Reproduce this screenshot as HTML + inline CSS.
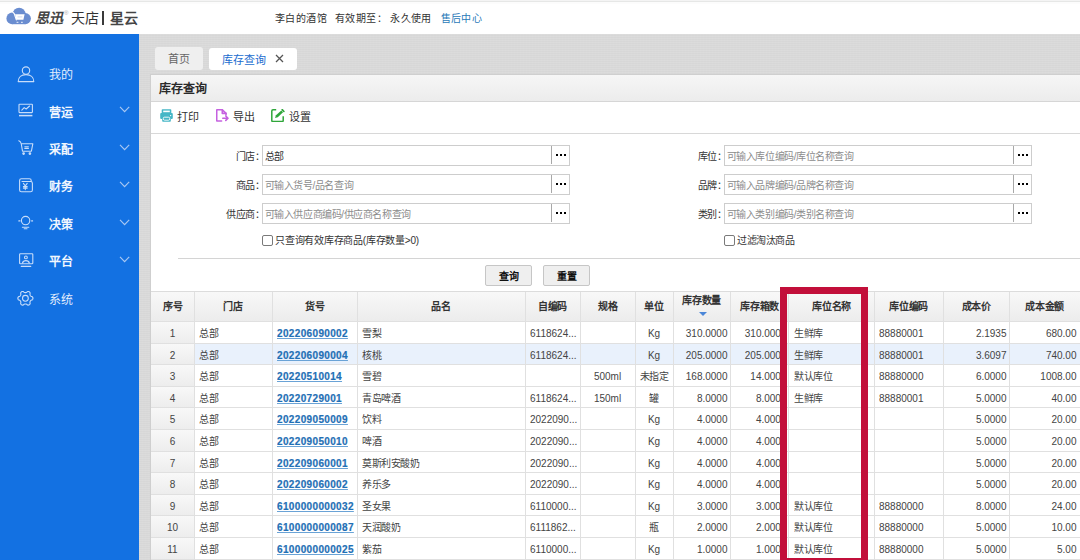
<!DOCTYPE html><html lang="zh-CN"><head><meta charset="utf-8"><style>
*{box-sizing:border-box;margin:0;padding:0}
html,body{width:1080px;height:560px;overflow:hidden;background:#fff;font-family:"Liberation Sans",sans-serif;color:#333}
.a{position:absolute;white-space:nowrap}
.mi{position:absolute;left:49px;font-size:12px;line-height:14px;color:#fff;white-space:nowrap}
.lbl{position:absolute;font-size:10px;line-height:14px;color:#333;text-align:right;white-space:nowrap;letter-spacing:-0.4px}
.inp{position:absolute;height:21px;border:1px solid #cdcdcd;background:#fff}
.ph{position:absolute;font-size:10px;line-height:14px;color:#8c8c8c;white-space:nowrap;letter-spacing:-0.4px}
.sep{position:absolute;width:1px;background:#a8a8a8}
.dot{position:absolute;width:2px;height:2px;background:#000}
.chk{position:absolute;width:11px;height:11px;border:1px solid #7a7a7a;border-radius:2px;background:#fff}
.qbtn{position:absolute;top:265px;width:47px;height:21px;border:1px solid #c6c6c6;border-radius:2px;background:#efefef}
.qbtn span{position:absolute;left:0;width:100%;top:3.5px;text-align:center;font-size:10px;line-height:14px;font-weight:bold;color:#111}
.th{position:absolute;font-size:10px;line-height:14px;font-weight:bold;color:#333;text-align:center;white-space:nowrap;letter-spacing:-0.3px;text-indent:0.3px}
.td{position:absolute;font-size:10px;line-height:14px;color:#444;white-space:nowrap;overflow:hidden}
.lnk{font-weight:bold;font-size:10px;letter-spacing:0.35px;-webkit-text-stroke:0.2px #1f6fb5;color:#1f6fb5;text-decoration:underline;text-decoration-color:#6aa3d6;text-underline-offset:0.5px}
</style></head><body>
<div class="a" style="left:0;top:0;width:1080px;height:1px;background:#f4f4f4"></div><div class="a" style="left:0;top:1px;width:1080px;height:1px;background:#e6e7e6"></div><div class="a" style="left:0;top:2px;width:1080px;height:2px;background:#fcfcfc"></div>
<svg class="a" style="left:0;top:0" width="40" height="34" viewBox="0 0 40 34">
<g fill="#6a8dd0"><circle cx="12.2" cy="18.4" r="5.8"/><circle cx="19.1" cy="14.1" r="6.4"/><circle cx="25.3" cy="18.6" r="5.6"/><rect x="12.2" y="17" width="13.1" height="7.2"/></g>
<path d="M15 14.3 L24.6 14.3 L23.4 19.7 L16.3 19.7 Z" fill="#fff"/>
<path d="M12.8 12.1 L14.2 13.5 L16.3 19.9" fill="none" stroke="#fff" stroke-width="1.1" stroke-linecap="round"/>
<path d="M17.6 16.9 H22.3" stroke="#c9d6ef" stroke-width="0.9"/>
<path d="M16.6 22.3 H18.4 M21 22.3 H22.8" stroke="#fff" stroke-width="0.9"/>
</svg>
<div class="a" style="left:34.5px;top:8.7px;font-size:14px;line-height:18px;color:#444;font-style:italic;font-weight:700">思迅</div>
<div class="a" style="left:64px;top:9px;font-size:6px;line-height:8px;color:#aaa">®</div>
<div class="a" style="left:70.5px;top:8.7px;font-size:14px;line-height:18px;color:#333;font-weight:500">天店</div>
<div class="a" style="left:102.2px;top:11.3px;width:1.5px;height:14px;background:#3a3a3a"></div>
<div class="a" style="left:109.5px;top:8.7px;font-size:14px;line-height:18px;color:#444;font-weight:700">星云</div>
<div class="a" style="left:275px;top:11.5px;font-size:10px;line-height:14px;color:#333;letter-spacing:0.4px">李白的酒馆</div>
<div class="a" style="left:335px;top:11.5px;font-size:10px;line-height:14px;color:#333;letter-spacing:0.4px">有效期至：</div>
<div class="a" style="left:390.2px;top:11.5px;font-size:10px;line-height:14px;color:#333;letter-spacing:0.4px">永久使用</div>
<div class="a" style="left:440.5px;top:11.5px;font-size:10px;line-height:14px;color:#2a7ab8;letter-spacing:0.4px">售后中心</div>
<div class="a" style="left:0;top:34px;width:139px;height:526px;background:#1371e2"></div>
<svg class="a" style="left:0;top:0" width="139" height="560" viewBox="0 0 139 560" fill="none" stroke="#c8ddfa" stroke-width="1.1" stroke-linecap="round" stroke-linejoin="round">
<circle cx="26" cy="70.6" r="3.7"/><path d="M18.2 81.6 C18.2 77 21.6 74.6 26 74.6 C30.4 74.6 33.8 77 33.8 81.6 Z"/>
<rect x="19" y="104.2" width="13.4" height="8.4" rx="0.6"/><path d="M19 115.6 h13.4" stroke-width="1.5" stroke-linecap="butt"/><path d="M21.8 110.2 L24.2 107.6 L26.2 109 L29.6 106"/>
<path d="M18.8 140.7 C20.6 141.3 21 142.4 21.3 144 L22.5 151.2 L31.4 151.2 L32.8 143.8 L21.4 143.8"/><path d="M24.8 146.8 h3.6 M24.8 148.4 h3.6"/><circle cx="23.6" cy="153.6" r="0.8" fill="#c8ddfa"/><circle cx="29.9" cy="153.6" r="0.8" fill="#c8ddfa"/>
<path d="M19.6 181.5 V190 a1.8 1.8 0 0 0 1.8 1.8 H30.6 a1.8 1.8 0 0 0 1.8 -1.8 V183.3 a1.8 1.8 0 0 0 -1.8 -1.8 H22 M19.6 181.5 V180.5 a1.8 1.8 0 0 1 1.8 -1.8 H29.4 a1.8 1.8 0 0 1 1.8 1.8 V181.5"/><path d="M23.4 183.4 L25.3 185.8 L27.2 183.4 M25.3 185.8 V189.6 M23.4 186.6 h3.8 M23.4 188.1 h3.8"/>
<circle cx="25.6" cy="220.6" r="4.2"/><path d="M22.4 227.2 h6.4 M24.2 228.8 h2.8 M18.8 220.9 h1.2 M31.6 220.9 h1"/>
<rect x="19.6" y="253.8" width="13.2" height="10" rx="0.8"/><circle cx="25.9" cy="257.4" r="1.4"/><path d="M22.5 263 C23.3 259.8 28.5 259.8 29.3 263"/><path d="M21.3 266.4 h9.4" stroke-width="1.2"/>
<path d="M32.95 298.30 L32.93 298.56 L32.88 298.82 L32.80 299.08 L32.68 299.32 L32.52 299.55 L32.32 299.77 L32.04 299.96 L31.51 300.05 L31.23 300.19 L31.01 300.34 L30.83 300.49 L30.67 300.64 L30.52 300.80 L30.40 300.96 L30.29 301.12 L30.20 301.30 L30.13 301.49 L30.06 301.69 L30.01 301.90 L29.98 302.14 L29.96 302.40 L29.97 302.71 L30.15 303.22 L30.13 303.55 L30.05 303.84 L29.92 304.09 L29.77 304.32 L29.59 304.52 L29.39 304.69 L29.18 304.84 L28.94 304.96 L28.69 305.04 L28.42 305.09 L28.15 305.11 L27.87 305.09 L27.58 305.02 L27.29 304.88 L26.94 304.47 L26.67 304.30 L26.44 304.18 L26.21 304.10 L26.00 304.03 L25.80 303.99 L25.60 303.96 L25.40 303.95 L25.20 303.96 L25.00 303.99 L24.80 304.03 L24.59 304.10 L24.36 304.18 L24.13 304.30 L23.86 304.47 L23.51 304.88 L23.22 305.02 L22.93 305.09 L22.65 305.11 L22.38 305.09 L22.11 305.04 L21.86 304.96 L21.62 304.84 L21.41 304.69 L21.21 304.52 L21.03 304.32 L20.88 304.09 L20.75 303.84 L20.67 303.55 L20.65 303.22 L20.83 302.71 L20.84 302.40 L20.82 302.14 L20.79 301.90 L20.74 301.69 L20.67 301.49 L20.60 301.30 L20.51 301.12 L20.40 300.96 L20.28 300.80 L20.13 300.64 L19.97 300.49 L19.79 300.34 L19.57 300.19 L19.29 300.05 L18.76 299.96 L18.48 299.77 L18.28 299.55 L18.12 299.32 L18.00 299.08 L17.92 298.82 L17.87 298.56 L17.85 298.30 L17.87 298.04 L17.92 297.78 L18.00 297.52 L18.12 297.28 L18.28 297.05 L18.48 296.83 L18.76 296.64 L19.29 296.55 L19.57 296.41 L19.79 296.26 L19.97 296.11 L20.13 295.96 L20.28 295.80 L20.40 295.64 L20.51 295.48 L20.60 295.30 L20.67 295.11 L20.74 294.91 L20.79 294.70 L20.82 294.46 L20.84 294.20 L20.83 293.89 L20.65 293.38 L20.67 293.05 L20.75 292.76 L20.88 292.51 L21.03 292.28 L21.21 292.08 L21.41 291.91 L21.62 291.76 L21.86 291.64 L22.11 291.56 L22.38 291.51 L22.65 291.49 L22.93 291.51 L23.22 291.58 L23.51 291.72 L23.86 292.13 L24.13 292.30 L24.36 292.42 L24.59 292.50 L24.80 292.57 L25.00 292.61 L25.20 292.64 L25.40 292.65 L25.60 292.64 L25.80 292.61 L26.00 292.57 L26.21 292.50 L26.44 292.42 L26.67 292.30 L26.94 292.13 L27.29 291.72 L27.58 291.58 L27.87 291.51 L28.15 291.49 L28.42 291.51 L28.69 291.56 L28.94 291.64 L29.18 291.76 L29.39 291.91 L29.59 292.08 L29.77 292.28 L29.92 292.51 L30.05 292.76 L30.13 293.05 L30.15 293.38 L29.97 293.89 L29.96 294.20 L29.98 294.46 L30.01 294.70 L30.06 294.91 L30.13 295.11 L30.20 295.30 L30.29 295.48 L30.40 295.64 L30.52 295.80 L30.67 295.96 L30.83 296.11 L31.01 296.26 L31.23 296.41 L31.51 296.55 L32.04 296.64 L32.32 296.83 L32.52 297.05 L32.68 297.28 L32.80 297.52 L32.88 297.78 L32.93 298.04 L32.95 298.30Z"/><circle cx="25.4" cy="298.3" r="2.9"/>
</svg>
<div class="mi" style="top:68.2px;font-weight:normal;color:#e2edfd">我的</div>
<div class="mi" style="top:105.6px;font-weight:bold;color:#f0f6fe">营运</div>
<svg class="a" style="left:119px;top:106.4px" width="11" height="7" viewBox="0 0 11 7" fill="none" stroke="#a8c7f2" stroke-width="1.2"><path d="M1 0.9 L5.6 5.6 L10.2 0.9"/></svg>
<div class="mi" style="top:143.0px;font-weight:bold;color:#f0f6fe">采配</div>
<svg class="a" style="left:119px;top:143.8px" width="11" height="7" viewBox="0 0 11 7" fill="none" stroke="#a8c7f2" stroke-width="1.2"><path d="M1 0.9 L5.6 5.6 L10.2 0.9"/></svg>
<div class="mi" style="top:180.4px;font-weight:bold;color:#f0f6fe">财务</div>
<svg class="a" style="left:119px;top:181.2px" width="11" height="7" viewBox="0 0 11 7" fill="none" stroke="#a8c7f2" stroke-width="1.2"><path d="M1 0.9 L5.6 5.6 L10.2 0.9"/></svg>
<div class="mi" style="top:217.8px;font-weight:bold;color:#f0f6fe">决策</div>
<svg class="a" style="left:119px;top:218.6px" width="11" height="7" viewBox="0 0 11 7" fill="none" stroke="#a8c7f2" stroke-width="1.2"><path d="M1 0.9 L5.6 5.6 L10.2 0.9"/></svg>
<div class="mi" style="top:255.2px;font-weight:bold;color:#f0f6fe">平台</div>
<svg class="a" style="left:119px;top:256.0px" width="11" height="7" viewBox="0 0 11 7" fill="none" stroke="#a8c7f2" stroke-width="1.2"><path d="M1 0.9 L5.6 5.6 L10.2 0.9"/></svg>
<div class="mi" style="top:292.6px;font-weight:normal;color:#e2edfd">系统</div>
<div class="a" style="left:139px;top:34px;width:941px;height:526px;background-color:#dbdbdb;background-image:repeating-linear-gradient(0deg,rgba(0,0,0,0.02) 0 1px,transparent 1px 2px),repeating-linear-gradient(90deg,rgba(255,255,255,0.03) 0 1px,transparent 1px 3px)"></div>
<div class="a" style="left:155px;top:47px;width:48px;height:23px;background:#efefef;border-radius:3px"></div>
<div class="a" style="left:168px;top:51.5px;font-size:11px;line-height:14px;color:#666">首页</div>
<div class="a" style="left:209px;top:48px;width:88px;height:22px;background:#fff;border-radius:3px"></div>
<div class="a" style="left:221.5px;top:52.5px;font-size:11px;line-height:14px;color:#1b6dcf">库存查询</div>
<svg class="a" style="left:275px;top:54px" width="9" height="9" viewBox="0 0 9 9" stroke="#555" stroke-width="1.3"><path d="M1 1 L8 8 M8 1 L1 8"/></svg>
<div class="a" style="left:150px;top:74px;width:940px;height:500px;background:#fff;border:1px solid #cfcfcf"></div>
<div class="a" style="left:151px;top:75px;width:940px;height:27px;background:linear-gradient(#f6f6f6,#ececec);border-bottom:1px solid #d6d6d6"></div>
<div class="a" style="left:159px;top:82px;font-size:12px;line-height:14px;font-weight:bold;color:#2a2a2a">库存查询</div>
<div class="a" style="left:151px;top:133px;width:940px;height:1px;background:#d8d8d8"></div>
<svg class="a" style="left:160px;top:109px" width="13" height="13" viewBox="0 0 13 13">
<path d="M2.5 0.3 h8 a0.8 0.8 0 0 1 0.8 0.8 V4 h-9.6 V1.1 a0.8 0.8 0 0 1 0.8 -0.8 Z" fill="#45b6c6"/>
<path d="M1.2 4 h10.6 a1 1 0 0 1 1 1 v4 a1 1 0 0 1 -1 1 h-1 v2 a0.8 0.8 0 0 1 -0.8 0.8 h-7 a0.8 0.8 0 0 1 -0.8 -0.8 v-2 h-1 a1 1 0 0 1 -1 -1 v-4 a1 1 0 0 1 1 -1 Z" fill="#45b6c6"/>
<rect x="3.2" y="1.6" width="6.6" height="1.6" fill="#fff"/>
<rect x="3.3" y="8.2" width="6.4" height="3" rx="1.2" fill="none" stroke="#fff" stroke-width="0.9"/>
<circle cx="10.6" cy="6.6" r="0.7" fill="#fff"/>
</svg>
<div class="a" style="left:177px;top:109.5px;font-size:11px;line-height:14px;color:#333">打印</div>
<svg class="a" style="left:215.7px;top:109px" width="13" height="13" viewBox="0 0 13 13" fill="none" stroke="#c561e0" stroke-width="1.6" stroke-linejoin="round" stroke-linecap="round">
<path d="M5.6 12 H1.5 a0.8 0.8 0 0 1 -0.8 -0.8 V1.5 a0.8 0.8 0 0 1 0.8 -0.8 H6.3 L10 4.4 V6"/><path d="M6.3 0.8 V4.4 H10"/><path d="M6.8 9.2 H11.8 M9.8 7 L12 9.2 L9.8 11.4"/>
</svg>
<div class="a" style="left:233px;top:109.5px;font-size:11px;line-height:14px;color:#333">导出</div>
<svg class="a" style="left:271px;top:109px" width="14" height="13" viewBox="0 0 14 13" fill="none" stroke="#2fa63a" stroke-width="1.5">
<path d="M5.2 0.8 H2 a1.2 1.2 0 0 0 -1.2 1.2 V11.4 a1.2 1.2 0 0 0 1.2 1.2 H11 a1.2 1.2 0 0 0 1.2 -1.2 V7.3"/>
<path d="M4 9 L4.97 6.34 L10.32 1.44 L12.08 3.36 L6.73 8.26 Z" fill="#2fa63a" stroke="none"/>
<path d="M11.2 0.6 L12.9 2.5" stroke-width="1.6" stroke-linecap="round"/>
</svg>
<div class="a" style="left:288.5px;top:109.5px;font-size:11px;line-height:14px;color:#333">设置</div>
<div class="lbl" style="left:160px;width:104.5px;top:149.5px">门店：</div>
<div class="lbl" style="left:620px;width:106.5px;top:149.5px">库位：</div>
<div class="inp" style="left:262px;top:145px;width:308px"></div>
<div class="ph" style="left:264.5px;top:149.5px;color:#333">总部</div>
<div class="sep" style="left:551px;top:146px;height:18px"></div>
<div class="dot" style="left:556px;top:154px"></div>
<div class="dot" style="left:560px;top:154px"></div>
<div class="dot" style="left:564px;top:154px"></div>
<div class="inp" style="left:724px;top:145px;width:308px"></div>
<div class="ph" style="left:726.5px;top:149.5px;color:#8c8c8c">可输入库位编码/库位名称查询</div>
<div class="sep" style="left:1013px;top:146px;height:18px"></div>
<div class="dot" style="left:1018px;top:154px"></div>
<div class="dot" style="left:1022px;top:154px"></div>
<div class="dot" style="left:1026px;top:154px"></div>
<div class="lbl" style="left:160px;width:104.5px;top:178.5px">商品：</div>
<div class="lbl" style="left:620px;width:106.5px;top:178.5px">品牌：</div>
<div class="inp" style="left:262px;top:174px;width:308px"></div>
<div class="ph" style="left:264.5px;top:178.5px;color:#8c8c8c">可输入货号/品名查询</div>
<div class="sep" style="left:551px;top:175px;height:18px"></div>
<div class="dot" style="left:556px;top:183px"></div>
<div class="dot" style="left:560px;top:183px"></div>
<div class="dot" style="left:564px;top:183px"></div>
<div class="inp" style="left:724px;top:174px;width:308px"></div>
<div class="ph" style="left:726.5px;top:178.5px;color:#8c8c8c">可输入品牌编码/品牌名称查询</div>
<div class="sep" style="left:1013px;top:175px;height:18px"></div>
<div class="dot" style="left:1018px;top:183px"></div>
<div class="dot" style="left:1022px;top:183px"></div>
<div class="dot" style="left:1026px;top:183px"></div>
<div class="lbl" style="left:160px;width:104.5px;top:207.5px">供应商：</div>
<div class="lbl" style="left:620px;width:106.5px;top:207.5px">类别：</div>
<div class="inp" style="left:262px;top:203px;width:308px"></div>
<div class="ph" style="left:264.5px;top:207.5px;color:#8c8c8c">可输入供应商编码/供应商名称查询</div>
<div class="sep" style="left:551px;top:204px;height:18px"></div>
<div class="dot" style="left:556px;top:212px"></div>
<div class="dot" style="left:560px;top:212px"></div>
<div class="dot" style="left:564px;top:212px"></div>
<div class="inp" style="left:724px;top:203px;width:308px"></div>
<div class="ph" style="left:726.5px;top:207.5px;color:#8c8c8c">可输入类别编码/类别名称查询</div>
<div class="sep" style="left:1013px;top:204px;height:18px"></div>
<div class="dot" style="left:1018px;top:212px"></div>
<div class="dot" style="left:1022px;top:212px"></div>
<div class="dot" style="left:1026px;top:212px"></div>
<div class="chk" style="left:262px;top:235px"></div><div class="a" style="left:275px;top:234px;font-size:10px;line-height:14px;color:#333;letter-spacing:-0.25px">只查询有效库存商品(库存数量&gt;0)</div>
<div class="chk" style="left:724px;top:235px"></div><div class="a" style="left:737px;top:234px;font-size:10px;line-height:14px;color:#333;letter-spacing:-0.4px">过滤淘汰商品</div>
<div class="a" style="left:178px;top:258px;width:902px;height:1px;background:#d4d4d4"></div>
<div class="qbtn" style="left:485px"><span>查询</span></div>
<div class="qbtn" style="left:543px"><span>重置</span></div>
<div class="a" style="left:151px;top:291px;width:940px;height:30px;background:linear-gradient(#f8f8f8,#ececec);border-top:1px solid #dcdcdc"></div>
<div class="th" style="left:151px;width:43px;top:300px">序号</div>
<div class="th" style="left:194px;width:78px;top:300px">门店</div>
<div class="th" style="left:272px;width:85px;top:300px">货号</div>
<div class="th" style="left:357px;width:168px;top:300px">品名</div>
<div class="th" style="left:525px;width:55px;top:300px">自编码</div>
<div class="th" style="left:580px;width:55px;top:300px">规格</div>
<div class="th" style="left:635px;width:38px;top:300px">单位</div>
<div class="th" style="left:673px;width:57px;top:294px">库存数量</div>
<svg class="a" style="left:699.0px;top:311.5px" width="8" height="5" viewBox="0 0 8 5"><path d="M0 0 H8 L4 4 Z" fill="#4a86d8"/></svg>
<div class="th" style="left:730px;width:59px;top:300px">库存箱数</div>
<div class="th" style="left:789px;width:85px;top:300px">库位名称</div>
<div class="th" style="left:874px;width:69px;top:300px">库位编码</div>
<div class="th" style="left:943px;width:66px;top:300px">成本价</div>
<div class="th" style="left:1009px;width:71px;top:300px">成本金额</div>
<div class="a" style="left:151px;top:321px;width:940px;height:22px;background:#fff;border-top:1px solid #e0e0e0"></div>
<div class="a" style="left:151px;top:322px;width:43px;height:21px;background:linear-gradient(#f8f8f8,#ededed)"></div>
<div class="a" style="left:151px;top:343px;width:940px;height:21px;background:#e9f1fc;border-top:1px solid #e0e0e0"></div>
<div class="a" style="left:151px;top:344px;width:43px;height:20px;background:linear-gradient(#f8f8f8,#ededed)"></div>
<div class="a" style="left:151px;top:364px;width:940px;height:22px;background:#fff;border-top:1px solid #e0e0e0"></div>
<div class="a" style="left:151px;top:365px;width:43px;height:21px;background:linear-gradient(#f8f8f8,#ededed)"></div>
<div class="a" style="left:151px;top:386px;width:940px;height:21px;background:#fff;border-top:1px solid #e0e0e0"></div>
<div class="a" style="left:151px;top:387px;width:43px;height:20px;background:linear-gradient(#f8f8f8,#ededed)"></div>
<div class="a" style="left:151px;top:407px;width:940px;height:22px;background:#fff;border-top:1px solid #e0e0e0"></div>
<div class="a" style="left:151px;top:408px;width:43px;height:21px;background:linear-gradient(#f8f8f8,#ededed)"></div>
<div class="a" style="left:151px;top:429px;width:940px;height:22px;background:#fff;border-top:1px solid #e0e0e0"></div>
<div class="a" style="left:151px;top:430px;width:43px;height:21px;background:linear-gradient(#f8f8f8,#ededed)"></div>
<div class="a" style="left:151px;top:451px;width:940px;height:21px;background:#fff;border-top:1px solid #e0e0e0"></div>
<div class="a" style="left:151px;top:452px;width:43px;height:20px;background:linear-gradient(#f8f8f8,#ededed)"></div>
<div class="a" style="left:151px;top:472px;width:940px;height:22px;background:#fff;border-top:1px solid #e0e0e0"></div>
<div class="a" style="left:151px;top:473px;width:43px;height:21px;background:linear-gradient(#f8f8f8,#ededed)"></div>
<div class="a" style="left:151px;top:494px;width:940px;height:21px;background:#fff;border-top:1px solid #e0e0e0"></div>
<div class="a" style="left:151px;top:495px;width:43px;height:20px;background:linear-gradient(#f8f8f8,#ededed)"></div>
<div class="a" style="left:151px;top:515px;width:940px;height:22px;background:#fff;border-top:1px solid #e0e0e0"></div>
<div class="a" style="left:151px;top:516px;width:43px;height:21px;background:linear-gradient(#f8f8f8,#ededed)"></div>
<div class="a" style="left:151px;top:537px;width:940px;height:22px;background:#fff;border-top:1px solid #e0e0e0"></div>
<div class="a" style="left:151px;top:538px;width:43px;height:21px;background:linear-gradient(#f8f8f8,#ededed)"></div>
<div class="a" style="left:151px;top:559px;width:940px;height:21px;background:#fff;border-top:1px solid #e0e0e0"></div>
<div class="a" style="left:151px;top:560px;width:43px;height:20px;background:linear-gradient(#f8f8f8,#ededed)"></div>
<div class="a" style="left:194px;top:292px;width:1px;height:269px;background:#e0e0e0"></div>
<div class="a" style="left:272px;top:292px;width:1px;height:269px;background:#e0e0e0"></div>
<div class="a" style="left:357px;top:292px;width:1px;height:269px;background:#e0e0e0"></div>
<div class="a" style="left:525px;top:292px;width:1px;height:269px;background:#e0e0e0"></div>
<div class="a" style="left:580px;top:292px;width:1px;height:269px;background:#e0e0e0"></div>
<div class="a" style="left:635px;top:292px;width:1px;height:269px;background:#e0e0e0"></div>
<div class="a" style="left:673px;top:292px;width:1px;height:269px;background:#e0e0e0"></div>
<div class="a" style="left:730px;top:292px;width:1px;height:269px;background:#e0e0e0"></div>
<div class="a" style="left:788px;top:292px;width:1px;height:269px;background:#e0e0e0"></div>
<div class="a" style="left:874px;top:292px;width:1px;height:269px;background:#e0e0e0"></div>
<div class="a" style="left:943px;top:292px;width:1px;height:269px;background:#e0e0e0"></div>
<div class="a" style="left:1009px;top:292px;width:1px;height:269px;background:#e0e0e0"></div>
<div class="td" style="top:327px;left:151px;width:43px;text-align:center;">1</div>
<div class="td" style="top:327px;left:199px;width:73px;letter-spacing:-0.4px;">总部</div>
<div class="td" style="top:327px;left:277px;width:80px;"><span class="lnk">202206090002</span></div>
<div class="td" style="top:327px;left:362px;width:163px;letter-spacing:-0.4px;">雪梨</div>
<div class="td" style="top:327px;left:530px;width:50px;">6118624...</div>
<div class="td" style="top:327px;left:635px;width:38px;text-align:center;">Kg</div>
<div class="td" style="top:327px;left:673px;width:54.5px;text-align:right;">310.0000</div>
<div class="td" style="top:327px;left:730px;width:56.5px;text-align:right;">310.0000</div>
<div class="td" style="top:327px;left:794px;width:80px;letter-spacing:-0.4px;">生鲜库</div>
<div class="td" style="top:327px;left:879px;width:64px;">88880001</div>
<div class="td" style="top:327px;left:943px;width:63.5px;text-align:right;">2.1935</div>
<div class="td" style="top:327px;left:1009px;width:67.5px;text-align:right;">680.00</div>
<div class="td" style="top:349px;left:151px;width:43px;text-align:center;">2</div>
<div class="td" style="top:349px;left:199px;width:73px;letter-spacing:-0.4px;">总部</div>
<div class="td" style="top:349px;left:277px;width:80px;"><span class="lnk">202206090004</span></div>
<div class="td" style="top:349px;left:362px;width:163px;letter-spacing:-0.4px;">核桃</div>
<div class="td" style="top:349px;left:530px;width:50px;">6118624...</div>
<div class="td" style="top:349px;left:635px;width:38px;text-align:center;">Kg</div>
<div class="td" style="top:349px;left:673px;width:54.5px;text-align:right;">205.0000</div>
<div class="td" style="top:349px;left:730px;width:56.5px;text-align:right;">205.0000</div>
<div class="td" style="top:349px;left:794px;width:80px;letter-spacing:-0.4px;">生鲜库</div>
<div class="td" style="top:349px;left:879px;width:64px;">88880001</div>
<div class="td" style="top:349px;left:943px;width:63.5px;text-align:right;">3.6097</div>
<div class="td" style="top:349px;left:1009px;width:67.5px;text-align:right;">740.00</div>
<div class="td" style="top:370px;left:151px;width:43px;text-align:center;">3</div>
<div class="td" style="top:370px;left:199px;width:73px;letter-spacing:-0.4px;">总部</div>
<div class="td" style="top:370px;left:277px;width:80px;"><span class="lnk">20220510014</span></div>
<div class="td" style="top:370px;left:362px;width:163px;letter-spacing:-0.4px;">雪碧</div>
<div class="td" style="top:370px;left:580px;width:55px;text-align:center;">500ml</div>
<div class="td" style="top:370px;left:635px;width:38px;text-align:center;letter-spacing:-0.4px;">未指定</div>
<div class="td" style="top:370px;left:673px;width:54.5px;text-align:right;">168.0000</div>
<div class="td" style="top:370px;left:730px;width:56.5px;text-align:right;">14.0000</div>
<div class="td" style="top:370px;left:794px;width:80px;letter-spacing:-0.4px;">默认库位</div>
<div class="td" style="top:370px;left:879px;width:64px;">88880000</div>
<div class="td" style="top:370px;left:943px;width:63.5px;text-align:right;">6.0000</div>
<div class="td" style="top:370px;left:1009px;width:67.5px;text-align:right;">1008.00</div>
<div class="td" style="top:392px;left:151px;width:43px;text-align:center;">4</div>
<div class="td" style="top:392px;left:199px;width:73px;letter-spacing:-0.4px;">总部</div>
<div class="td" style="top:392px;left:277px;width:80px;"><span class="lnk">20220729001</span></div>
<div class="td" style="top:392px;left:362px;width:163px;letter-spacing:-0.4px;">青岛啤酒</div>
<div class="td" style="top:392px;left:530px;width:50px;">6118624...</div>
<div class="td" style="top:392px;left:580px;width:55px;text-align:center;">150ml</div>
<div class="td" style="top:392px;left:635px;width:38px;text-align:center;letter-spacing:-0.4px;">罐</div>
<div class="td" style="top:392px;left:673px;width:54.5px;text-align:right;">8.0000</div>
<div class="td" style="top:392px;left:730px;width:56.5px;text-align:right;">8.0000</div>
<div class="td" style="top:392px;left:794px;width:80px;letter-spacing:-0.4px;">生鲜库</div>
<div class="td" style="top:392px;left:879px;width:64px;">88880001</div>
<div class="td" style="top:392px;left:943px;width:63.5px;text-align:right;">5.0000</div>
<div class="td" style="top:392px;left:1009px;width:67.5px;text-align:right;">40.00</div>
<div class="td" style="top:413px;left:151px;width:43px;text-align:center;">5</div>
<div class="td" style="top:413px;left:199px;width:73px;letter-spacing:-0.4px;">总部</div>
<div class="td" style="top:413px;left:277px;width:80px;"><span class="lnk">202209050009</span></div>
<div class="td" style="top:413px;left:362px;width:163px;letter-spacing:-0.4px;">饮料</div>
<div class="td" style="top:413px;left:530px;width:50px;">2022090...</div>
<div class="td" style="top:413px;left:635px;width:38px;text-align:center;">Kg</div>
<div class="td" style="top:413px;left:673px;width:54.5px;text-align:right;">4.0000</div>
<div class="td" style="top:413px;left:730px;width:56.5px;text-align:right;">4.0000</div>
<div class="td" style="top:413px;left:943px;width:63.5px;text-align:right;">5.0000</div>
<div class="td" style="top:413px;left:1009px;width:67.5px;text-align:right;">20.00</div>
<div class="td" style="top:435px;left:151px;width:43px;text-align:center;">6</div>
<div class="td" style="top:435px;left:199px;width:73px;letter-spacing:-0.4px;">总部</div>
<div class="td" style="top:435px;left:277px;width:80px;"><span class="lnk">202209050010</span></div>
<div class="td" style="top:435px;left:362px;width:163px;letter-spacing:-0.4px;">啤酒</div>
<div class="td" style="top:435px;left:530px;width:50px;">2022090...</div>
<div class="td" style="top:435px;left:635px;width:38px;text-align:center;">Kg</div>
<div class="td" style="top:435px;left:673px;width:54.5px;text-align:right;">4.0000</div>
<div class="td" style="top:435px;left:730px;width:56.5px;text-align:right;">4.0000</div>
<div class="td" style="top:435px;left:943px;width:63.5px;text-align:right;">5.0000</div>
<div class="td" style="top:435px;left:1009px;width:67.5px;text-align:right;">20.00</div>
<div class="td" style="top:457px;left:151px;width:43px;text-align:center;">7</div>
<div class="td" style="top:457px;left:199px;width:73px;letter-spacing:-0.4px;">总部</div>
<div class="td" style="top:457px;left:277px;width:80px;"><span class="lnk">202209060001</span></div>
<div class="td" style="top:457px;left:362px;width:163px;letter-spacing:-0.4px;">莫斯利安酸奶</div>
<div class="td" style="top:457px;left:530px;width:50px;">2022090...</div>
<div class="td" style="top:457px;left:635px;width:38px;text-align:center;">Kg</div>
<div class="td" style="top:457px;left:673px;width:54.5px;text-align:right;">4.0000</div>
<div class="td" style="top:457px;left:730px;width:56.5px;text-align:right;">4.0000</div>
<div class="td" style="top:457px;left:943px;width:63.5px;text-align:right;">5.0000</div>
<div class="td" style="top:457px;left:1009px;width:67.5px;text-align:right;">20.00</div>
<div class="td" style="top:478px;left:151px;width:43px;text-align:center;">8</div>
<div class="td" style="top:478px;left:199px;width:73px;letter-spacing:-0.4px;">总部</div>
<div class="td" style="top:478px;left:277px;width:80px;"><span class="lnk">202209060002</span></div>
<div class="td" style="top:478px;left:362px;width:163px;letter-spacing:-0.4px;">养乐多</div>
<div class="td" style="top:478px;left:530px;width:50px;">2022090...</div>
<div class="td" style="top:478px;left:635px;width:38px;text-align:center;">Kg</div>
<div class="td" style="top:478px;left:673px;width:54.5px;text-align:right;">4.0000</div>
<div class="td" style="top:478px;left:730px;width:56.5px;text-align:right;">4.0000</div>
<div class="td" style="top:478px;left:943px;width:63.5px;text-align:right;">5.0000</div>
<div class="td" style="top:478px;left:1009px;width:67.5px;text-align:right;">20.00</div>
<div class="td" style="top:500px;left:151px;width:43px;text-align:center;">9</div>
<div class="td" style="top:500px;left:199px;width:73px;letter-spacing:-0.4px;">总部</div>
<div class="td" style="top:500px;left:277px;width:80px;"><span class="lnk">6100000000032</span></div>
<div class="td" style="top:500px;left:362px;width:163px;letter-spacing:-0.4px;">圣女果</div>
<div class="td" style="top:500px;left:530px;width:50px;">6110000...</div>
<div class="td" style="top:500px;left:635px;width:38px;text-align:center;">Kg</div>
<div class="td" style="top:500px;left:673px;width:54.5px;text-align:right;">3.0000</div>
<div class="td" style="top:500px;left:730px;width:56.5px;text-align:right;">3.0000</div>
<div class="td" style="top:500px;left:794px;width:80px;letter-spacing:-0.4px;">默认库位</div>
<div class="td" style="top:500px;left:879px;width:64px;">88880000</div>
<div class="td" style="top:500px;left:943px;width:63.5px;text-align:right;">8.0000</div>
<div class="td" style="top:500px;left:1009px;width:67.5px;text-align:right;">24.00</div>
<div class="td" style="top:521px;left:151px;width:43px;text-align:center;">10</div>
<div class="td" style="top:521px;left:199px;width:73px;letter-spacing:-0.4px;">总部</div>
<div class="td" style="top:521px;left:277px;width:80px;"><span class="lnk">6100000000087</span></div>
<div class="td" style="top:521px;left:362px;width:163px;letter-spacing:-0.4px;">天润酸奶</div>
<div class="td" style="top:521px;left:530px;width:50px;">6111862...</div>
<div class="td" style="top:521px;left:635px;width:38px;text-align:center;letter-spacing:-0.4px;">瓶</div>
<div class="td" style="top:521px;left:673px;width:54.5px;text-align:right;">2.0000</div>
<div class="td" style="top:521px;left:730px;width:56.5px;text-align:right;">2.0000</div>
<div class="td" style="top:521px;left:794px;width:80px;letter-spacing:-0.4px;">默认库位</div>
<div class="td" style="top:521px;left:879px;width:64px;">88880000</div>
<div class="td" style="top:521px;left:943px;width:63.5px;text-align:right;">5.0000</div>
<div class="td" style="top:521px;left:1009px;width:67.5px;text-align:right;">10.00</div>
<div class="td" style="top:543px;left:151px;width:43px;text-align:center;">11</div>
<div class="td" style="top:543px;left:199px;width:73px;letter-spacing:-0.4px;">总部</div>
<div class="td" style="top:543px;left:277px;width:80px;"><span class="lnk">6100000000025</span></div>
<div class="td" style="top:543px;left:362px;width:163px;letter-spacing:-0.4px;">紫茄</div>
<div class="td" style="top:543px;left:530px;width:50px;">6110000...</div>
<div class="td" style="top:543px;left:635px;width:38px;text-align:center;">Kg</div>
<div class="td" style="top:543px;left:673px;width:54.5px;text-align:right;">1.0000</div>
<div class="td" style="top:543px;left:730px;width:56.5px;text-align:right;">1.0000</div>
<div class="td" style="top:543px;left:794px;width:80px;letter-spacing:-0.4px;">默认库位</div>
<div class="td" style="top:543px;left:879px;width:64px;">88880000</div>
<div class="td" style="top:543px;left:943px;width:63.5px;text-align:right;">5.0000</div>
<div class="td" style="top:543px;left:1009px;width:67.5px;text-align:right;">5.00</div>
<div class="a" style="left:780px;top:287px;width:88px;height:278px;border:7px solid #c20f3a"></div>
</body></html>
